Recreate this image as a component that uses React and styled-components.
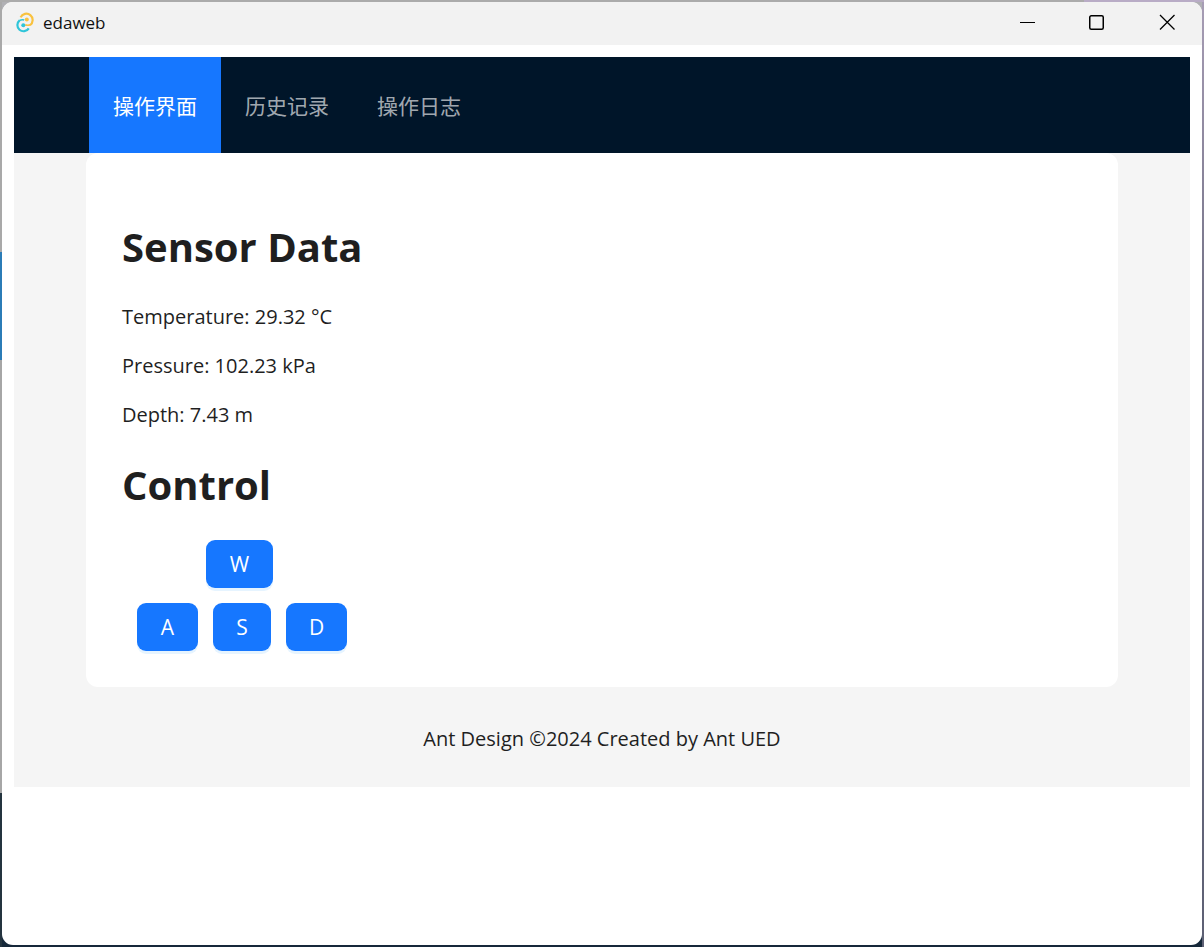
import React from 'react';
import styled, { createGlobalStyle } from 'styled-components';

const GlobalStyle = createGlobalStyle`
  * { box-sizing: border-box; }
  body { margin: 0; }
  body, button { font-family: "Open Sans", "Noto Sans", "Noto Sans CJK SC", sans-serif; }
`;

const Desktop = styled.div`
  display: flex;
  min-height: 100vh;
  padding: 2px;
  background:
    linear-gradient(to right, #ababab 90%, #b9acc6 90%) top / 100% 2px no-repeat,
    linear-gradient(#a9a9a9 252px, #2b7cb7 252px 360px, #a6a6a6 360px 793px, #24343f 793px) left / 2px 100% no-repeat,
    linear-gradient(#a79db5, #77758a 30%, #5d6074) right / 2px 100% no-repeat,
    linear-gradient(#b0b0b4 50%, #16283a 50%);
`;

const Window = styled.div`
  flex: 1;
  min-width: 0;
  background: #fff;
  border-radius: 11px;
  overflow: hidden;
`;

const TitleBar = styled.header`
  display: flex;
  align-items: center;
  height: 43px;
  padding: 0 0 2px 13px;
  background: #f2f2f2;
`;

const AppName = styled.span`
  flex: 1;
  margin-left: 8px;
  font-size: 17px;
  line-height: 24px;
  color: #111;
`;

const WindowButton = styled.button`
  display: flex;
  align-items: center;
  justify-content: center;
  width: 70px;
  height: 40px;
  padding: 0 0 2px;
  border: 0;
  background: transparent;
  color: #000;
`;

const Page = styled.div`
  padding: 12px;
`;

const Layout = styled.div`
  background: #f5f5f5;
`;

const Nav = styled.nav`
  display: flex;
  padding: 0 75px;
  background: #001529;
`;

const NavItem = styled.a`
  padding: 2px 24px 0;
  font-size: 21px;
  line-height: 94px;
  text-decoration: none;
  white-space: nowrap;
  color: ${({ $active }) => ($active ? '#fff' : 'rgba(255, 255, 255, 0.65)')};
  background: ${({ $active }) => ($active ? '#1677ff' : 'transparent')};
`;

const Content = styled.main`
  padding: 0 72px;
`;

const Card = styled.div`
  padding: 39px 36px 36px;
  background: #fff;
  border-radius: 12px;
`;

const Heading = styled.h1`
  margin: 25px 0;
  font-size: 40px;
  line-height: 60px;
  font-weight: 700;
  color: #1f1f1f;
`;

const Reading = styled.p`
  margin: 19px 0;
  font-size: 20px;
  line-height: 30px;
  color: #1f1f1f;
`;

const KeyPad = styled.div`
  display: flex;
  flex-direction: column;
  gap: 15px;
`;

const KeyRow = styled.div`
  display: flex;
  gap: 15px;
  padding-left: ${({ $indent }) => $indent}px;
`;

const Key = styled.button`
  width: ${({ $width }) => $width}px;
  height: 48px;
  padding: 0;
  border: 0;
  border-radius: 9px;
  background: #1677ff;
  box-shadow: 0 3px 0 rgba(5, 145, 255, 0.1);
  font-size: 21px;
  color: #fff;
`;

const Footer = styled.footer`
  padding: 36px 75px 32px;
  font-size: 20px;
  line-height: 32px;
  text-align: center;
  color: #1f1f1f;
`;

const Logo = () => (
  <svg width="20" height="22" viewBox="0 0 20 22" fill="none" strokeWidth="2.2" aria-hidden="true">
    <path d="M5.6 5.4A6.3 6.3 0 1 1 15 13.1" stroke="#f9c23f" />
    <circle cx="11.8" cy="7.6" r="2" fill="#f9c23f" />
    <path d="M4.6 8.3A6.2 6.2 0 1 0 13.8 16.4" stroke="#2fc5d9" />
    <path d="M10.2 12.8Q12.8 13.8 15.4 12.8" stroke="#f9c23f" strokeWidth="1.5" />
    <path d="M4.2 8.6Q7 7.2 9.2 8" stroke="#2fc5d9" strokeWidth="1.5" />
    <circle cx="8.3" cy="13.2" r="2" fill="#2fc5d9" />
  </svg>
);

const ControlIcon = ({ children }) => (
  <svg width="16" height="16" viewBox="0 0 16 16" fill="none" stroke="currentColor" aria-hidden="true">
    {children}
  </svg>
);

const readings = ['Temperature: 29.32 °C', 'Pressure: 102.23 kPa', 'Depth: 7.43 m'];

export default function App() {
  return (
    <>
      <GlobalStyle />
      <Desktop>
        <Window>
          <TitleBar>
            <Logo />
            <AppName>edaweb</AppName>
            <WindowButton aria-label="Minimize">
              <ControlIcon><path d="M1 8.5H16" /></ControlIcon>
            </WindowButton>
            <WindowButton aria-label="Maximize">
              <ControlIcon><rect x="0.75" y="1.75" width="13.5" height="13.5" rx="1.5" strokeWidth="1.5" /></ControlIcon>
            </WindowButton>
            <WindowButton aria-label="Close">
              <ControlIcon><path d="M1 1l14.5 14.5M15.5 1L1 15.5" strokeWidth="1.3" /></ControlIcon>
            </WindowButton>
          </TitleBar>
          <Page>
            <Layout>
              <Nav>
                <NavItem href="#operate" $active>操作界面</NavItem>
                <NavItem href="#history">历史记录</NavItem>
                <NavItem href="#log">操作日志</NavItem>
              </Nav>
              <Content>
                <Card>
                  <Heading>Sensor Data</Heading>
                  {readings.map((text) => <Reading key={text}>{text}</Reading>)}
                  <Heading>Control</Heading>
                  <KeyPad>
                    <KeyRow $indent={84}>
                      <Key $width={67}>W</Key>
                    </KeyRow>
                    <KeyRow $indent={15}>
                      <Key $width={61}>A</Key>
                      <Key $width={58}>S</Key>
                      <Key $width={61}>D</Key>
                    </KeyRow>
                  </KeyPad>
                </Card>
              </Content>
              <Footer>Ant Design ©2024 Created by Ant UED</Footer>
            </Layout>
          </Page>
        </Window>
      </Desktop>
    </>
  );
}
